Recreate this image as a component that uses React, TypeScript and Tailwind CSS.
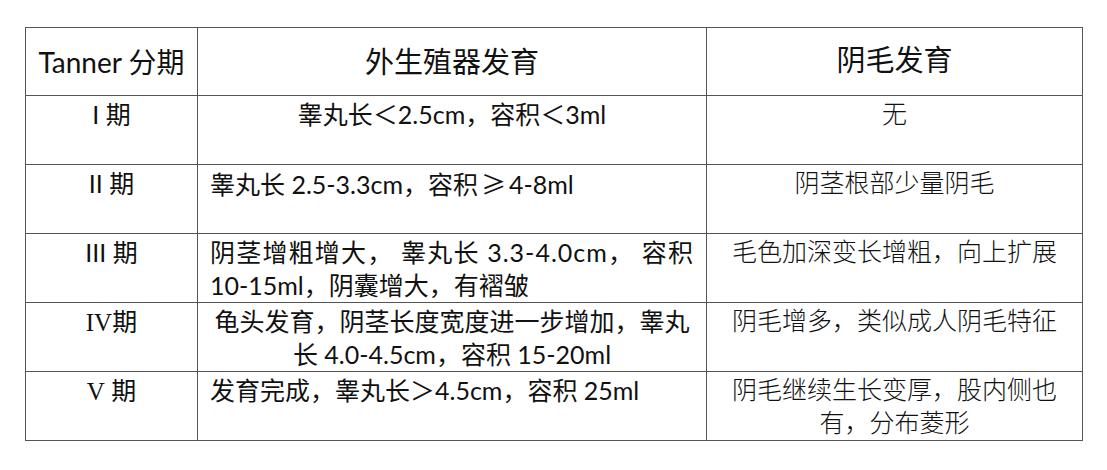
const sans = "font-['Lato','Noto_Sans_CJK_SC',sans-serif]"
const song = "font-['Liberation_Serif','Noto_Sans_CJK_SC',serif]"
const roman = "font-['Liberation_Serif','DejaVu_Serif',serif]"
const cjk = "font-['Noto_Sans_CJK_SC',sans-serif]"

const rows = [
  {
    stage: <span className={sans}>I 期</span>,
    genital: <div className="text-center">睾丸长＜2.5cm，容积＜3ml</div>,
    hair: '无',
  },
  {
    stage: <span className={sans}>II 期</span>,
    genital: (
      <div className="text-left">
        睾丸长 2.5-3.3cm，容积<span className={`${cjk} mx-[3px]`}>≥</span>4-8ml
      </div>
    ),
    hair: '阴茎根部少量阴毛',
  },
  {
    stage: <span className={sans}>III 期</span>,
    genital: (
      <div>
        <div className="text-justify [text-align-last:justify] tracking-[1px] whitespace-nowrap">阴茎增粗增大， 睾丸长 3.3-4.0cm， 容积</div>
        <div className="text-left">10-15ml，阴囊增大，有褶皱</div>
      </div>
    ),
    hair: '毛色加深变长增粗，向上扩展',
  },
  {
    stage: (
      <span>
        <span className={roman}>IV</span>
        <span className={sans}>期</span>
      </span>
    ),
    genital: (
      <div className="text-center">
        龟头发育，阴茎长度宽度进一步增加，睾丸
        <br />
        长 4.0-4.5cm，容积 15-20ml
      </div>
    ),
    hair: '阴毛增多，类似成人阴毛特征',
  },
  {
    stage: (
      <span>
        <span className={roman}>V</span>
        <span className={sans}> 期</span>
      </span>
    ),
    genital: <div className="text-left">发育完成，睾丸长＞4.5cm，容积 25ml</div>,
    hair: (
      <>
        阴毛继续生长变厚，股内侧也
        <br />
        有，分布菱形
      </>
    ),
  },
]

const App = () => {
  return (
    <div className="w-[1107px] h-[470px] bg-white pt-[27px] pl-[25px] text-[#111]">
      <table className="border-collapse table-fixed w-[1057px]">
        <colgroup>
          <col className="w-[172px]" />
          <col className="w-[509px]" />
          <col className="w-[376px]" />
        </colgroup>
        <thead>
          {/* 表头 */}
          <tr className="h-[68px]">
            <th className={`border border-[#555] font-normal text-[28px] ${sans}`}>Tanner 分期</th>
            <th className={`border border-[#555] font-normal text-[29px] ${sans}`}>外生殖器发育</th>
            <th className={`border border-[#555] font-normal text-[29px] ${song}`}>阴毛发育</th>
          </tr>
        </thead>
        <tbody>
          {rows.map((row, i) => (
            <tr key={i} className={i === rows.length - 1 ? 'h-[68px]' : 'h-[69px]'}>
              <td className="border border-[#555] align-top text-center text-[25px] leading-[33px] pt-[2px]">
                {row.stage}
              </td>
              <td className={`border border-[#555] align-top text-[25px] leading-[33px] pt-[2px] px-[12px] ${sans}`}>
                {row.genital}
              </td>
              <td className={`border border-[#555] align-top text-center text-[25px] leading-[33px] pt-[2px] px-[12px] font-light ${song}`}>
                {row.hair}
              </td>
            </tr>
          ))}
        </tbody>
      </table>
    </div>
  )
}

export default App
